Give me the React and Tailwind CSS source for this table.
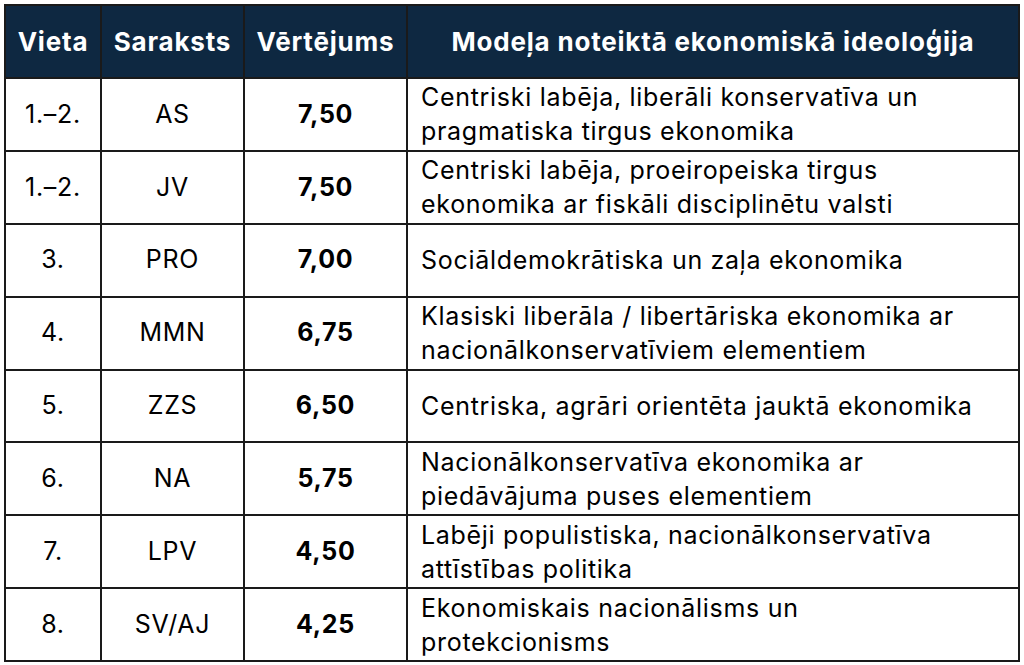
import React from "react";

const rows = [
  { place: "1.–2.", list: "AS", score: "7,50", text: ["Centriski labēja, liberāli konservatīva un", "pragmatiska tirgus ekonomika"] },
  { place: "1.–2.", list: "JV", score: "7,50", text: ["Centriski labēja, proeiropeiska tirgus", "ekonomika ar fiskāli disciplinētu valsti"] },
  { place: "3.", list: "PRO", score: "7,00", text: ["Sociāldemokrātiska un zaļa ekonomika"] },
  { place: "4.", list: "MMN", score: "6,75", text: ["Klasiski liberāla / libertāriska ekonomika ar", "nacionālkonservatīviem elementiem"] },
  { place: "5.", list: "ZZS", score: "6,50", text: ["Centriska, agrāri orientēta jauktā ekonomika"] },
  { place: "6.", list: "NA", score: "5,75", text: ["Nacionālkonservatīva ekonomika ar", "piedāvājuma puses elementiem"] },
  { place: "7.", list: "LPV", score: "4,50", text: ["Labēji populistiska, nacionālkonservatīva", "attīstības politika"] },
  { place: "8.", list: "SV/AJ", score: "4,25", text: ["Ekonomiskais nacionālisms un", "protekcionisms"] },
];

export default function App() {
  return (
    <div className="w-[1024px] h-[665px] bg-white pl-[4px] pt-[4px]" style={{ fontFamily: "Inter, Roboto, sans-serif" }}>
      <table className="w-[1016px] border-collapse border-2 border-[#1a1a1a] text-black table-fixed">
        <colgroup>
          <col className="w-[96px]" />
          <col className="w-[143px]" />
          <col className="w-[163px]" />
          <col />
        </colgroup>
        <thead>
          <tr className="h-[73px] bg-[#0e2841] text-white text-[26px] font-bold tracking-[0.8px]">
            <th className="border-2 border-[#1a1a1a] text-center">Vieta</th>
            <th className="border-2 border-[#1a1a1a] text-center">Saraksts</th>
            <th className="border-2 border-[#1a1a1a] text-center">Vērtējums</th>
            <th className="border-2 border-[#1a1a1a] text-center">Modeļa noteiktā ekonomiskā ideoloģija</th>
          </tr>
        </thead>
        <tbody className="text-[25px] tracking-[0.7px]">
          {rows.map((r, i) => (
            <tr key={i} className="h-[72.9px]">
              <td className="border-2 border-[#1a1a1a] text-center">{r.place}</td>
              <td className="border-2 border-[#1a1a1a] text-center">{r.list}</td>
              <td className="border-2 border-[#1a1a1a] font-bold text-center">{r.score}</td>
              <td className="border-2 border-[#1a1a1a] leading-[34px] pl-[13px]">
                {r.text.map((t, j) => (
                  <div key={j}>{t}</div>
                ))}
              </td>
            </tr>
          ))}
        </tbody>
      </table>
    </div>
  );
}
